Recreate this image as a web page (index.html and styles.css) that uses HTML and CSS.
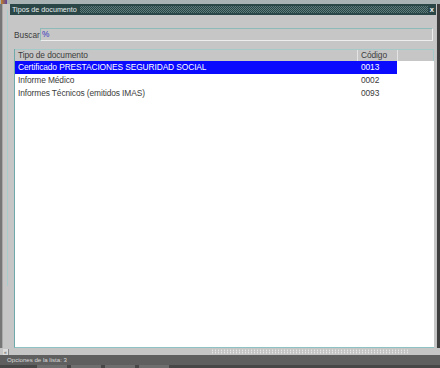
FILE: index.html
```html
<!DOCTYPE html>
<html lang="es">
<head>
    <meta charset="UTF-8">
    <title>Tipos de documento</title>
    <link rel="stylesheet" href="styles.css">
</head>
<body>
    <div class="top-strip"><span class="app-icon"></span></div>
    <div class="middle">
        <div class="left-gutter"><span class="gutter-line"></span></div>
        <div class="dialog">
            <div class="title-bar">
                <span class="title-text">Tipos de documento</span>
                <span class="title-fill"></span>
                <span class="close">x</span>
            </div>
            <div class="dialog-body">
                <div class="search-row">
                    <label class="search-label" for="buscar">Buscar</label>
                    <div class="search-input" id="buscar">%</div>
                </div>
                <div class="list">
                    <div class="list-head">
                        <div class="cell col-name">Tipo de documento</div>
                        <div class="cell col-code">Código</div>
                        <div class="cell col-rest"></div>
                    </div>
                    <div class="list-row selected">
                        <div class="cell col-name">Certificado PRESTACIONES SEGURIDAD SOCIAL</div>
                        <div class="cell col-code">0013</div>
                    </div>
                    <div class="list-row">
                        <div class="cell col-name">Informe Médico</div>
                        <div class="cell col-code">0002</div>
                    </div>
                    <div class="list-row">
                        <div class="cell col-name">Informes Técnicos (emitidos IMAS)</div>
                        <div class="cell col-code">0093</div>
                    </div>
                </div>
            </div>
        </div>
        <div class="right-gutter"></div>
    </div>
    <div class="hscroll">
        <span class="scroll-btn">«</span>
        <span class="scroll-dots"></span>
    </div>
    <div class="status-bar">Opciones de la lista: 3</div>
    <div class="bottom-strip">
        <span class="tab"></span>
        <span class="tab"></span>
        <span class="tab"></span>
        <span class="tab"></span>
    </div>
</body>
</html>
```

FILE: styles.css
```css
body {
    margin: 0;
    width: 440px;
    height: 368px;
    overflow: hidden;
    background: #5e5e5e;
    font-family: 'Liberation Sans', Arial, sans-serif;
    display: flex;
    flex-direction: column;
}

.top-strip {
    height: 4px;
    background: #a9b3b3;
    display: flex;
}

.app-icon {
    width: 6px;
    height: 4px;
    margin-left: 1px;
    background: linear-gradient(90deg, #c08020, #6040a0);
}

.middle {
    display: flex;
    height: 344px;
}

.left-gutter {
    width: 10px;
    background: linear-gradient(90deg, #767676 0 2px, #a9a9a9 2px 3px, #c6c6c6 3px);
    display: flex;
}

.gutter-line {
    width: 1px;
    height: 276px;
    margin: 6px 0 0 7px;
    background: #a7cccc;
}

.dialog {
    width: 426px;
    display: flex;
    flex-direction: column;
    background: #c6c6c6;
}

.title-bar {
    height: 11px;
    display: flex;
    align-items: center;
    background: #2b4646;
}

.title-text {
    color: #e6eeee;
    font-size: 7.2px;
    padding: 0 3px 0 2px;
}

.title-fill {
    flex: 1;
    height: 7px;
    background: repeating-conic-gradient(#5d7b7b 0 25%, #2b4646 0 50%) 0 0 / 2px 2px;
}

.close {
    color: #f0f4f4;
    font-size: 7.5px;
    font-weight: bold;
    padding: 0 2px 0 2px;
}

.dialog-body {
    flex: 1;
    display: flex;
    flex-direction: column;
    padding: 13px 2px 0 4px;
}

.search-row {
    display: flex;
    align-items: center;
    height: 13px;
}

.search-label {
    width: 26px;
    font-size: 8.3px;
    color: #3c3c3c;
}

.search-input {
    flex: 1;
    height: 11px;
    margin-right: 1px;
    border-top: 1px solid #8fbaba;
    border-left: 1px solid #8fbaba;
    border-bottom: 1px solid #eeeeee;
    border-right: 1px solid #eeeeee;
    font-size: 8.3px;
    line-height: 11px;
    padding-left: 1px;
    color: #3434c0;
}

.list {
    flex: 1;
    margin-top: 8px;
    background: #ffffff;
    border-left: 1px solid #6fa9a9;
    border-bottom: 1px solid #8fc3c3;
}

.list-head {
    display: flex;
    height: 11px;
    background: #c6c6c6;
    border-top: 1px solid #a4caca;
}

.cell {
    font-size: 8.4px;
    letter-spacing: -0.1px;
    color: #3c3c3c;
    padding-left: 3px;
    white-space: nowrap;
    box-sizing: border-box;
}

.list-head .cell {
    line-height: 11px;
    border-left: 1px solid #e4e4e4;
}

.list-head .col-name {
    border-left: none;
}

.col-name {
    width: 342px;
}

.col-code {
    width: 40px;
}

.col-rest {
    flex: 1;
    border-right: 1px solid #a4caca;
}

.list-row {
    display: flex;
    width: 382px;
    height: 13px;
    line-height: 13px;
}

.list-row .col-code {
    padding-left: 4px;
}

.list-row.selected {
    background: #0a0aff;
}

.list-row.selected .cell {
    color: #ffffff;
}

.right-gutter {
    width: 4px;
    background: linear-gradient(90deg, #c2c2c2 0 1px, #3e3e3e 1px);
}

.hscroll {
    height: 7px;
    background: #c6c6c6;
    display: flex;
    align-items: center;
}

.scroll-btn {
    width: 5px;
    height: 6px;
    margin-left: 3px;
    font-size: 5px;
    line-height: 6px;
    text-align: center;
    color: #555;
    background: #dcdcdc;
    border-right: 1px solid #8a8a8a;
}

.scroll-dots {
    width: 198px;
    height: 5px;
    margin-left: 202px;
    background: radial-gradient(circle, #f2f2f2 0.6px, transparent 0.9px) 0 0 / 3px 2.5px;
}

.status-bar {
    height: 10px;
    line-height: 10px;
    background: #5f5f5f;
    color: #dadada;
    font-size: 6.1px;
    padding-left: 7px;
}

.bottom-strip {
    flex: 1;
    background: #474747;
    display: flex;
    gap: 4px;
    padding-left: 37px;
}

.tab {
    width: 30px;
    background: #6e6e6e;
}
```
